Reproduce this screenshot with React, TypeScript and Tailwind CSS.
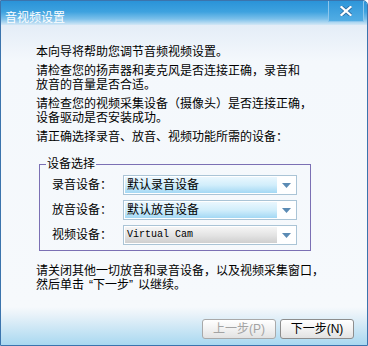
import React from 'react';

const Arrow = () => (
  <svg width="9" height="5" viewBox="0 0 9 5">
    <path d="M0 0H9L4.5 5Z" fill="#5b8bb4" />
  </svg>
);

const CloseGlyph = () => (
  <svg width="12" height="10" viewBox="0 0 12 10">
    <path d="M1.5 1 L10.5 9 M10.5 1 L1.5 9" stroke="#2f6fa6" strokeWidth="4" strokeLinecap="square" />
    <path d="M1.5 1 L10.5 9 M10.5 1 L1.5 9" stroke="#ffffff" strokeWidth="2.2" strokeLinecap="square" />
  </svg>
);

interface ComboProps {
  value: string;
  grey?: boolean;
}

const Combo: React.FC<ComboProps> = ({ value, grey }) => (
  <div className="w-[174px] h-[20px] border border-[#aac4d6] bg-white flex items-center pl-[1px]">
    <div
      className={
        grey
          ? "w-[152px] h-[16px] flex items-center pl-[2px] bg-[linear-gradient(#f5f5f5,#e4e4e4_50%,#cfcfcf)]"
          : "w-[152px] h-[16px] flex items-center pl-[2px] bg-[linear-gradient(#eaf7fe,#d2eefb_50%,#a3d8f4)]"
      }
    >
      {grey ? (
        <span className="font-['Liberation_Mono',monospace] text-[10px] leading-[16px]">{value}</span>
      ) : (
        <span className="text-[12px] leading-[16px]">{value}</span>
      )}
    </div>
    <div className="flex-1 flex justify-center items-center">
      <Arrow />
    </div>
  </div>
);

const DEVICES = [
  { label: '录音设备：', value: '默认录音设备' },
  { label: '放音设备：', value: '默认放音设备' },
  { label: '视频设备：', value: 'Virtual Cam', grey: true },
];

export default function App() {
  return (
    <div className="w-[368px] h-[346px] border border-[#3b74ad] rounded-tr-[5px] flex flex-col overflow-hidden font-['Liberation_Sans','Noto_Sans_CJK_SC',sans-serif] text-black text-[12px]">
      {/* title bar */}
      <div className="h-[24px] shrink-0 flex items-start bg-[linear-gradient(#2a93d8,#3ea2df_45%,#7cc0ea_75%,#d4e8f6)]">
        <span className="text-white text-[12px] leading-[14px] mt-[10px] ml-[4px] flex-1">音视频设置</span>
        <div className="w-[36px] h-[21px] mr-[3px] border-x border-b border-[#8cc6ec] bg-[linear-gradient(#2e96da,#52ade4)] flex items-center justify-center">
          <CloseGlyph />
        </div>
      </div>

      {/* body */}
      <div className="flex-1 flex flex-col bg-[linear-gradient(#e4edf7_0px,#f4f8fc_36px,#f6f9fc_282px,#e8f2f9_290px,#a9d8f0_320px)]">
        <div className="pl-[35px] pt-[20px] leading-[14px] whitespace-nowrap flex flex-col gap-[5px]">
          <p>本向导将帮助您调节音频视频设置。</p>
          <p>
            请检查您的扬声器和麦克风是否连接正确，录音和
            <br />
            放音的音量是否合适。
          </p>
          <p>
            请检查您的视频采集设备（摄像头）是否连接正确，
            <br />
            设备驱动是否安装成功。
          </p>
          <p>请正确选择录音、放音、视频功能所需的设备：</p>
        </div>

        <fieldset className="ml-[38px] mt-[13px] w-[272px] border border-[#7b70b4] pb-[5px]">
          <legend className="ml-[6px] px-[1px] leading-[14px]">设备选择</legend>
          <div className="flex flex-col gap-[5px] mt-[4px]">
            {DEVICES.map((d) => (
              <div key={d.label} className="flex items-center pl-[12px]">
                <span className="w-[71px] leading-[14px]">{d.label}</span>
                <Combo value={d.value} grey={d.grey} />
              </div>
            ))}
          </div>
        </fieldset>

        <p className="pl-[35px] mt-[13px] leading-[14px] whitespace-nowrap">
          请关闭其他一切放音和录音设备，以及视频采集窗口，
          <br />
          然后单击<span className="pl-[5px]">“</span>下一步<span className="pr-[5px]">”</span>以继续。
        </p>

        <div className="mt-auto mb-[6px] pr-[13px] flex justify-end gap-[4px]">
          <button className="w-[74px] h-[20px] rounded-[3px] border border-[#a9a9a9] bg-[linear-gradient(#ffffff,#f2f2f2_50%,#e2e2e2)] text-[#a3a3a3] text-[12px] leading-[14px]">
            上一步(P)
          </button>
          <button className="w-[74px] h-[20px] rounded-[3px] border border-[#8d8d8d] bg-[linear-gradient(#ffffff,#f2f2f2_50%,#e2e2e2)] text-black text-[12px] leading-[14px]">
            下一步(N)
          </button>
        </div>
      </div>
    </div>
  );
}
